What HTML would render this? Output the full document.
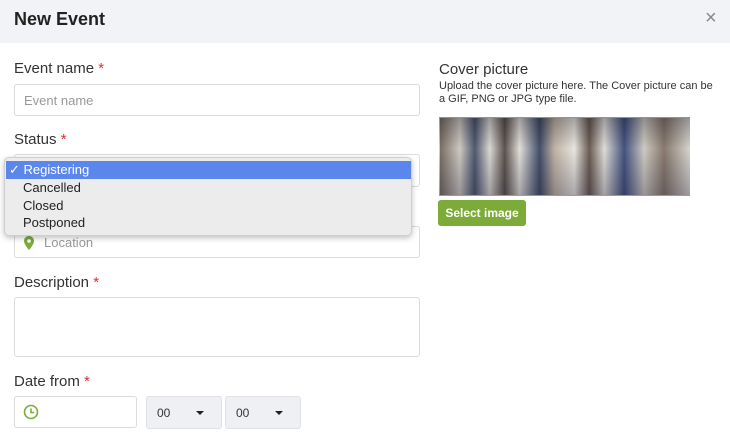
<!DOCTYPE html>
<html><head><meta charset="utf-8"><style>
*{box-sizing:border-box;margin:0;padding:0}
body{width:730px;height:435px;overflow:hidden;background:#fff;font-family:"Liberation Sans",sans-serif;color:#333;position:relative}
.a{position:absolute}
.hdr{left:0;top:0;width:730px;height:43px;background:#f2f3f6}
.lbl{font-size:15px;color:#333;left:14px}
.lbl b{color:#d9322e;font-weight:normal}
.inp{border:1px solid #dcdcdc;border-radius:3px;background:#fff}
.sel{background:#eef0f4;border:1px solid #dfe1e5;border-radius:3px;font-size:12px;padding:9px 0 0 10px}
.sel i{position:absolute;right:17px;top:14px;border-left:4px solid transparent;border-right:4px solid transparent;border-top:4px solid #222}
.dd{left:4px;top:157px;width:408px;height:79px;background:#ececec;border:1px solid #cfcfcf;border-radius:5px;box-shadow:0 2px 6px rgba(0,0,0,.25);font-size:13px;color:#222}
.dd div{position:absolute;left:18px}
</style></head><body>
<div class="a hdr"></div>
<div class="a" style="left:14px;top:9px;font-size:18px;font-weight:bold;color:#222">New Event</div>
<div class="a" style="left:705px;top:7px;font-size:20px;color:#888">×</div>

<div class="a lbl" style="top:60px">Event name <b>*</b></div>
<div class="a inp" style="left:14px;top:84px;width:406px;height:32px"></div>
<div class="a" style="left:24px;top:93px;font-size:13px;color:#999">Event name</div>

<div class="a lbl" style="top:131px">Status <b>*</b></div>
<div class="a inp" style="left:14px;top:154px;width:406px;height:33px"></div>

<div class="a inp" style="left:14px;top:226px;width:406px;height:32px"></div>
<svg class="a" style="left:24px;top:236px" width="10" height="14" viewBox="0 0 10 14"><path d="M5 0C2.2 0 0 2.2 0 5c0 3.5 5 9 5 9s5-5.5 5-9C10 2.2 7.8 0 5 0z" fill="#7cab3a"/><circle cx="5" cy="5" r="1.8" fill="#fff"/></svg>
<div class="a" style="left:44px;top:235px;font-size:13px;color:#999">Location</div>

<div class="a dd">
 <div style="left:1px;top:3px;width:405px;height:18px;background:#5b87ec"></div>
 <div style="left:4px;top:4px;color:#fff">✓ Registering</div>
 <div style="top:22px">Cancelled</div>
 <div style="top:40px">Closed</div>
 <div style="top:57px">Postponed</div>
</div>

<div class="a lbl" style="top:274px">Description <b>*</b></div>
<div class="a inp" style="left:14px;top:297px;width:406px;height:60px"></div>

<div class="a lbl" style="top:373px">Date from <b>*</b></div>
<div class="a inp" style="left:14px;top:396px;width:123px;height:32px"></div>
<svg class="a" style="left:23px;top:404px" width="16" height="16" viewBox="0 0 16 16"><circle cx="8" cy="8" r="6.5" fill="none" stroke="#7cab3a" stroke-width="1.6"/><path d="M8 4.5V8.5H11" fill="none" stroke="#7cab3a" stroke-width="1.6"/></svg>
<div class="a sel" style="left:146px;top:396px;width:76px;height:33px">00<i></i></div>
<div class="a sel" style="left:225px;top:396px;width:76px;height:33px">00<i></i></div>

<div class="a" style="left:439px;top:61px;font-size:15px;color:#333">Cover picture</div>
<div class="a" style="left:439px;top:80px;font-size:11px;line-height:13px;color:#333;width:280px">Upload the cover picture here. The Cover picture can be a GIF, PNG or JPG type file.</div>
<div class="a" style="left:439px;top:117px;width:251px;height:79px;border:1px solid #ccc;background:linear-gradient(90deg,#6a5e52 0%,#c9c3bb 8%,#3b4660 14%,#d8d4cf 20%,#4a4038 26%,#e0dcd6 32%,#2e3b58 40%,#b8aa9a 46%,#e6e2dc 54%,#5a4a40 60%,#dcd8d2 66%,#2f4070 74%,#c9c4bc 82%,#7a6a5c 90%,#d0ccc6 100%)"></div>
<div class="a" style="left:439px;top:117px;width:251px;height:79px;background:linear-gradient(180deg,rgba(40,40,50,.35),rgba(255,255,255,.1) 40%,rgba(60,60,80,.35))"></div>
<div class="a" style="left:438px;top:200px;width:88px;height:26px;background:#7cab3a;border-radius:3px;color:#fff;font-size:12px;font-weight:bold;text-align:center;line-height:26px">Select image</div>
</body></html>
